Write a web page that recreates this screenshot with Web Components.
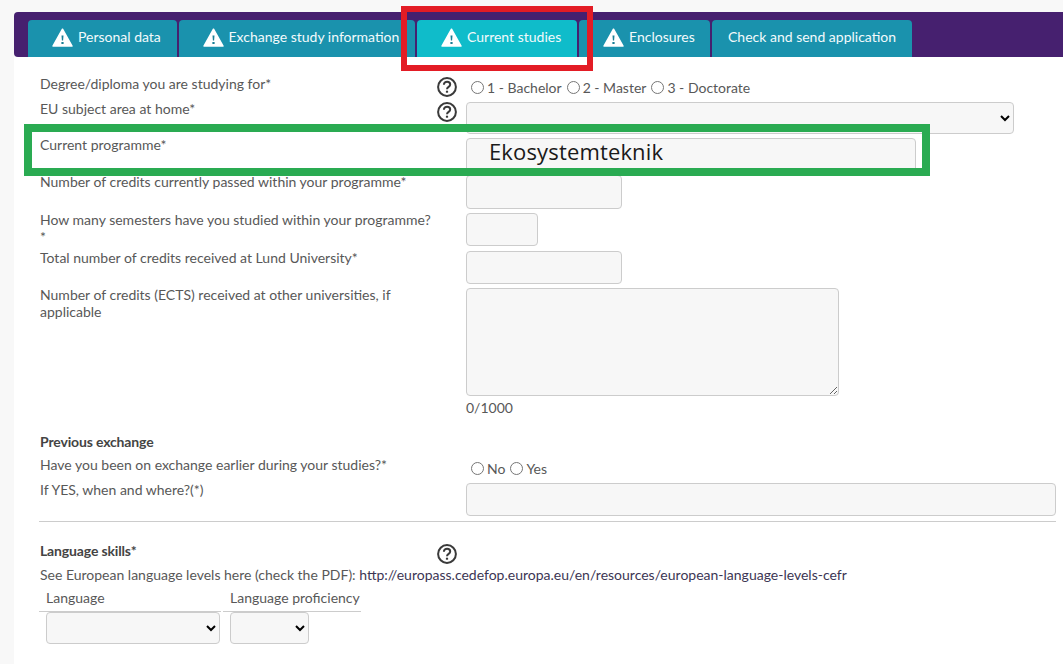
<!DOCTYPE html>
<html lang="en">
<head>
<meta charset="utf-8">
<title>Current studies</title>
<style>
  html, body { margin: 0; background: #f8f8f8; }
  body { font-family: Lato, "Liberation Sans", sans-serif; font-size: 14px; color: #585858; overflow: hidden; height: 664px; }
</style>
</head>
<body>
<application-page>
  <tab-bar slot="tabs">
    <tab-item warn style="width:148.5px">Personal data</tab-item>
    <tab-item warn style="width:236.5px">Exchange study information</tab-item>
    <tab-item warn active style="width:160px">Current studies</tab-item>
    <tab-item warn style="width:131px">Enclosures</tab-item>
    <tab-item style="width:200px">Check and send application</tab-item>
  </tab-bar>

  <form-row help="1" min="26" shift="-1">
    <span slot="label">Degree/diploma you are studying for*</span>
    <radio-group options="1 - Bachelor|2 - Master|3 - Doctorate"></radio-group>
  </form-row>
  <form-row help="0" gap="4">
    <span slot="label">EU subject area at home*</span>
    <select-box width="548" height="32"></select-box>
  </form-row>
  <form-row>
    <span slot="label">Current programme*</span>
    <text-box width="450" height="37"><span class="pasted">Ekosystemteknik</span></text-box>
  </form-row>
  <form-row gap="4" shift="-2">
    <span slot="label">Number of credits currently passed within your programme*</span>
    <text-box width="156" height="34"></text-box>
  </form-row>
  <form-row gap="5">
    <span slot="label">How many semesters have you studied within your programme?<br>*</span>
    <text-box width="72" height="33"></text-box>
  </form-row>
  <form-row gap="4">
    <span slot="label">Total number of credits received at Lund University*</span>
    <text-box width="156" height="33"></text-box>
  </form-row>
  <form-row>
    <span slot="label">Number of credits (ECTS) received at other universities, if<br>applicable</span>
    <text-area-box width="373" height="108"></text-area-box>
  </form-row>
  <form-row min="24">
    <char-count>0/1000</char-count>
  </form-row>

  <section-title style="margin-top:13px">Previous exchange</section-title>
  <form-row min="25" style="margin-top:7px">
    <span slot="label">Have you been on exchange earlier during your studies?*</span>
    <radio-group options="No|Yes" style="padding-top:2px"></radio-group>
  </form-row>
  <form-row>
    <span slot="label">If YES, when and where?(*)</span>
    <text-box width="590" height="33"></text-box>
  </form-row>
  <form-divider></form-divider>

  <form-row help="0" min="24" shift="-2" style="margin-top:22px">
    <section-title slot="label" style="padding-left:0">Language skills*</section-title>
  </form-row>
  <language-note style="margin-top:-2px">See European language levels here (check the PDF): <a>http://europass.cedefop.europa.eu/en/resources/european-language-levels-cefr</a></language-note>
  <language-table></language-table>

  <annotation-frame slot="overlay" color="#e31c25" thick="6" style="left:401px;top:6px;width:192px;height:65px"></annotation-frame>
  <annotation-frame slot="overlay" color="#2aab52" thick="8" style="left:24px;top:124px;width:906px;height:52px"></annotation-frame>
</application-page>

<script>
const sharedField = `
  box-sizing: border-box;
  background: #f7f7f7;
  border: 1px solid #ccc;
  border-radius: 4px;
`;

class ApplicationPage extends HTMLElement {
  constructor() {
    super();
    this.attachShadow({ mode: "open" });
    this.shadowRoot.innerHTML = `
      <style>
        :host { display: block; position: relative; padding: 12px 0 0 14px; }
        main { background: #fff; padding: 19px 7px 0 25px; height: 607px; box-sizing: border-box; }
      </style>
      <slot name="tabs"></slot>
      <main><slot></slot></main>
      <slot name="overlay"></slot>
    `;
  }
}

class TabBar extends HTMLElement {
  constructor() {
    super();
    this.attachShadow({ mode: "open" });
    this.shadowRoot.innerHTML = `
      <style>
        :host {
          display: flex;
          gap: 2px;
          height: 45px;
          box-sizing: border-box;
          padding: 8px 0 0 14px;
          background: #46206f;
          border-radius: 4px 0 0 4px;
        }
      </style>
      <slot></slot>
    `;
  }
}

class TabItem extends HTMLElement {
  constructor() {
    super();
    this.attachShadow({ mode: "open" });
    const warn = this.hasAttribute("warn");
    this.shadowRoot.innerHTML = `
      <style>
        :host {
          display: flex;
          align-items: center;
          box-sizing: border-box;
          padding: 0 0 5px 16px;
          background: #1a92ad;
          border-radius: 4px 4px 0 0;
          color: #f2fafc;
          font-size: 14px;
          white-space: nowrap;
        }
        :host([active]) { background: #0fbcca; }
        svg { margin: 3px 5px 0 8px; flex: none; }
      </style>
      ${warn ? `<svg width="21" height="19" viewBox="0 0 21 19">
        <path fill="#fff" stroke="#fff" stroke-width="1.5" stroke-linejoin="round" d="M10.5 1.2 20 18H1z"/>
        <path fill="#1a7f96" d="M9.5 7.5h2l-.4 5h-1.2zM9.4 14h2.2v2H9.4z"/>
      </svg>` : ""}
      <slot></slot>
    `;
  }
}

class HelpIcon extends HTMLElement {
  constructor() {
    super();
    this.attachShadow({ mode: "open" });
    this.shadowRoot.innerHTML = `
      <style>
        :host { display: block; width: 20px; height: 20px; }
        svg { display: block; }
      </style>
      <svg width="20" height="20" viewBox="0 0 20 20" fill="none" stroke="#3a3a3a">
        <circle cx="10" cy="10" r="8.9" stroke-width="2"/>
        <path stroke-width="2" d="M6.9 7.8c0-1.9 1.4-3 3.2-3 1.8 0 3.1 1.1 3.1 2.7 0 2.4-3.2 2.3-3.2 4.7"/>
        <path stroke-width="2.2" d="M10 13.7v2"/>
      </svg>
    `;
  }
}

class FormRow extends HTMLElement {
  constructor() {
    super();
    this.attachShadow({ mode: "open" });
    const help = this.getAttribute("help");
    this.shadowRoot.innerHTML = `
      <style>
        :host {
          display: grid;
          grid-template-columns: 398px 29px 1fr;
          align-items: start;
          line-height: 17px;
          margin-bottom: ${this.getAttribute("gap") || 0}px;
          min-height: ${this.getAttribute("min") || 0}px;
        }
        .label { margin-top: ${this.getAttribute("shift") || -2}px; padding-left: 1px; }
        help-icon { margin-top: ${help || 0}px; }
      </style>
      <div class="label"><slot name="label"></slot></div>
      <div>${help !== null ? "<help-icon></help-icon>" : ""}</div>
      <div><slot></slot></div>
    `;
  }
}

class RadioGroup extends HTMLElement {
  constructor() {
    super();
    this.attachShadow({ mode: "open" });
    const options = this.getAttribute("options").split("|");
    this.shadowRoot.innerHTML = `
      <style>
        :host { display: block; padding-top: 3px; line-height: 17px; white-space: nowrap; }
        input { margin: 0 3px 0 5px; vertical-align: -1px; }
      </style>
      ${options.map((o) => `<label><input type="radio" name="r">${o}</label>`).join("")}
    `;
  }
}

class SizedField extends HTMLElement {
  get sizeCss() {
    return `width: ${this.getAttribute("width")}px; height: ${this.getAttribute("height")}px;`;
  }
}

class TextBox extends SizedField {
  constructor() {
    super();
    this.attachShadow({ mode: "open" });
    this.shadowRoot.innerHTML = `
      <style>
        :host { display: block; ${this.sizeCss} ${sharedField} padding: 0 0 0 22px;
          font: 22px/25px "Open Sans", "Noto Sans", sans-serif; letter-spacing: 0.15px; color: #1a1a1a; }
      </style>
      <slot></slot>
    `;
  }
}

class TextAreaBox extends SizedField {
  constructor() {
    super();
    this.attachShadow({ mode: "open" });
    this.shadowRoot.innerHTML = `
      <style>
        :host { display: block; ${this.sizeCss} }
        textarea { display: block; width: 100%; height: 100%; margin: 0; outline: 0; ${sharedField} }
      </style>
      <textarea></textarea>
    `;
  }
}

class SelectBox extends SizedField {
  constructor() {
    super();
    this.attachShadow({ mode: "open" });
    this.shadowRoot.innerHTML = `
      <style>
        :host { display: block; ${this.sizeCss} }
        select { display: block; width: 100%; height: 100%; margin: 0; ${sharedField} }
      </style>
      <select><option></option></select>
    `;
  }
}

class CharCount extends HTMLElement {
  constructor() {
    super();
    this.attachShadow({ mode: "open" });
    this.shadowRoot.innerHTML = `
      <style>:host { display: block; line-height: 24px; }</style>
      <slot></slot>
    `;
  }
}

class SectionTitle extends HTMLElement {
  constructor() {
    super();
    this.attachShadow({ mode: "open" });
    this.shadowRoot.innerHTML = `
      <style>:host { display: block; padding-left: 1px; font-weight: 700; line-height: 18px; color: #444; letter-spacing: -0.15px; }</style>
      <slot></slot>
    `;
  }
}

class FormDivider extends HTMLElement {
  constructor() {
    super();
    this.attachShadow({ mode: "open" });
    this.shadowRoot.innerHTML = `
      <style>:host { display: block; margin-top: 5px; height: 1px; background: #ccc; }</style>
    `;
  }
}

class LanguageNote extends HTMLElement {
  constructor() {
    super();
    this.attachShadow({ mode: "open" });
    this.shadowRoot.innerHTML = `
      <style>
        :host { display: block; padding-left: 1px; line-height: 17px; white-space: nowrap; }
        ::slotted(a) { color: #3c3654; }
      </style>
      <slot></slot>
    `;
  }
}

class LanguageTable extends HTMLElement {
  constructor() {
    super();
    this.attachShadow({ mode: "open" });
    this.shadowRoot.innerHTML = `
      <style>
        :host {
          display: grid;
          grid-template-columns: 182px 138px;
          column-gap: 2px;
          margin-top: 6px;
          width: 322px;
          line-height: 17px;
        }
        .head { height: 23px; box-sizing: border-box; border-bottom: 1px solid #ccc; padding: 0 0 0 7px; }
        .cell { padding-left: 7px; }
      </style>
      <div class="head">Language</div>
      <div class="head">Language proficiency</div>
      <div class="cell"><select-box width="174" height="32"></select-box></div>
      <div class="cell"><select-box width="79" height="32"></select-box></div>
    `;
  }
}

class AnnotationFrame extends HTMLElement {
  constructor() {
    super();
    this.attachShadow({ mode: "open" });
    this.shadowRoot.innerHTML = `
      <style>
        :host {
          display: block;
          position: absolute;
          box-sizing: border-box;
          border: ${this.getAttribute("thick")}px solid ${this.getAttribute("color")};
        }
      </style>
    `;
  }
}

customElements.define("help-icon", HelpIcon);
customElements.define("select-box", SelectBox);
customElements.define("text-box", TextBox);
customElements.define("text-area-box", TextAreaBox);
customElements.define("radio-group", RadioGroup);
customElements.define("char-count", CharCount);
customElements.define("section-title", SectionTitle);
customElements.define("form-divider", FormDivider);
customElements.define("language-note", LanguageNote);
customElements.define("language-table", LanguageTable);
customElements.define("annotation-frame", AnnotationFrame);
customElements.define("form-row", FormRow);
customElements.define("tab-item", TabItem);
customElements.define("tab-bar", TabBar);
customElements.define("application-page", ApplicationPage);
</script>
</body>
</html>
